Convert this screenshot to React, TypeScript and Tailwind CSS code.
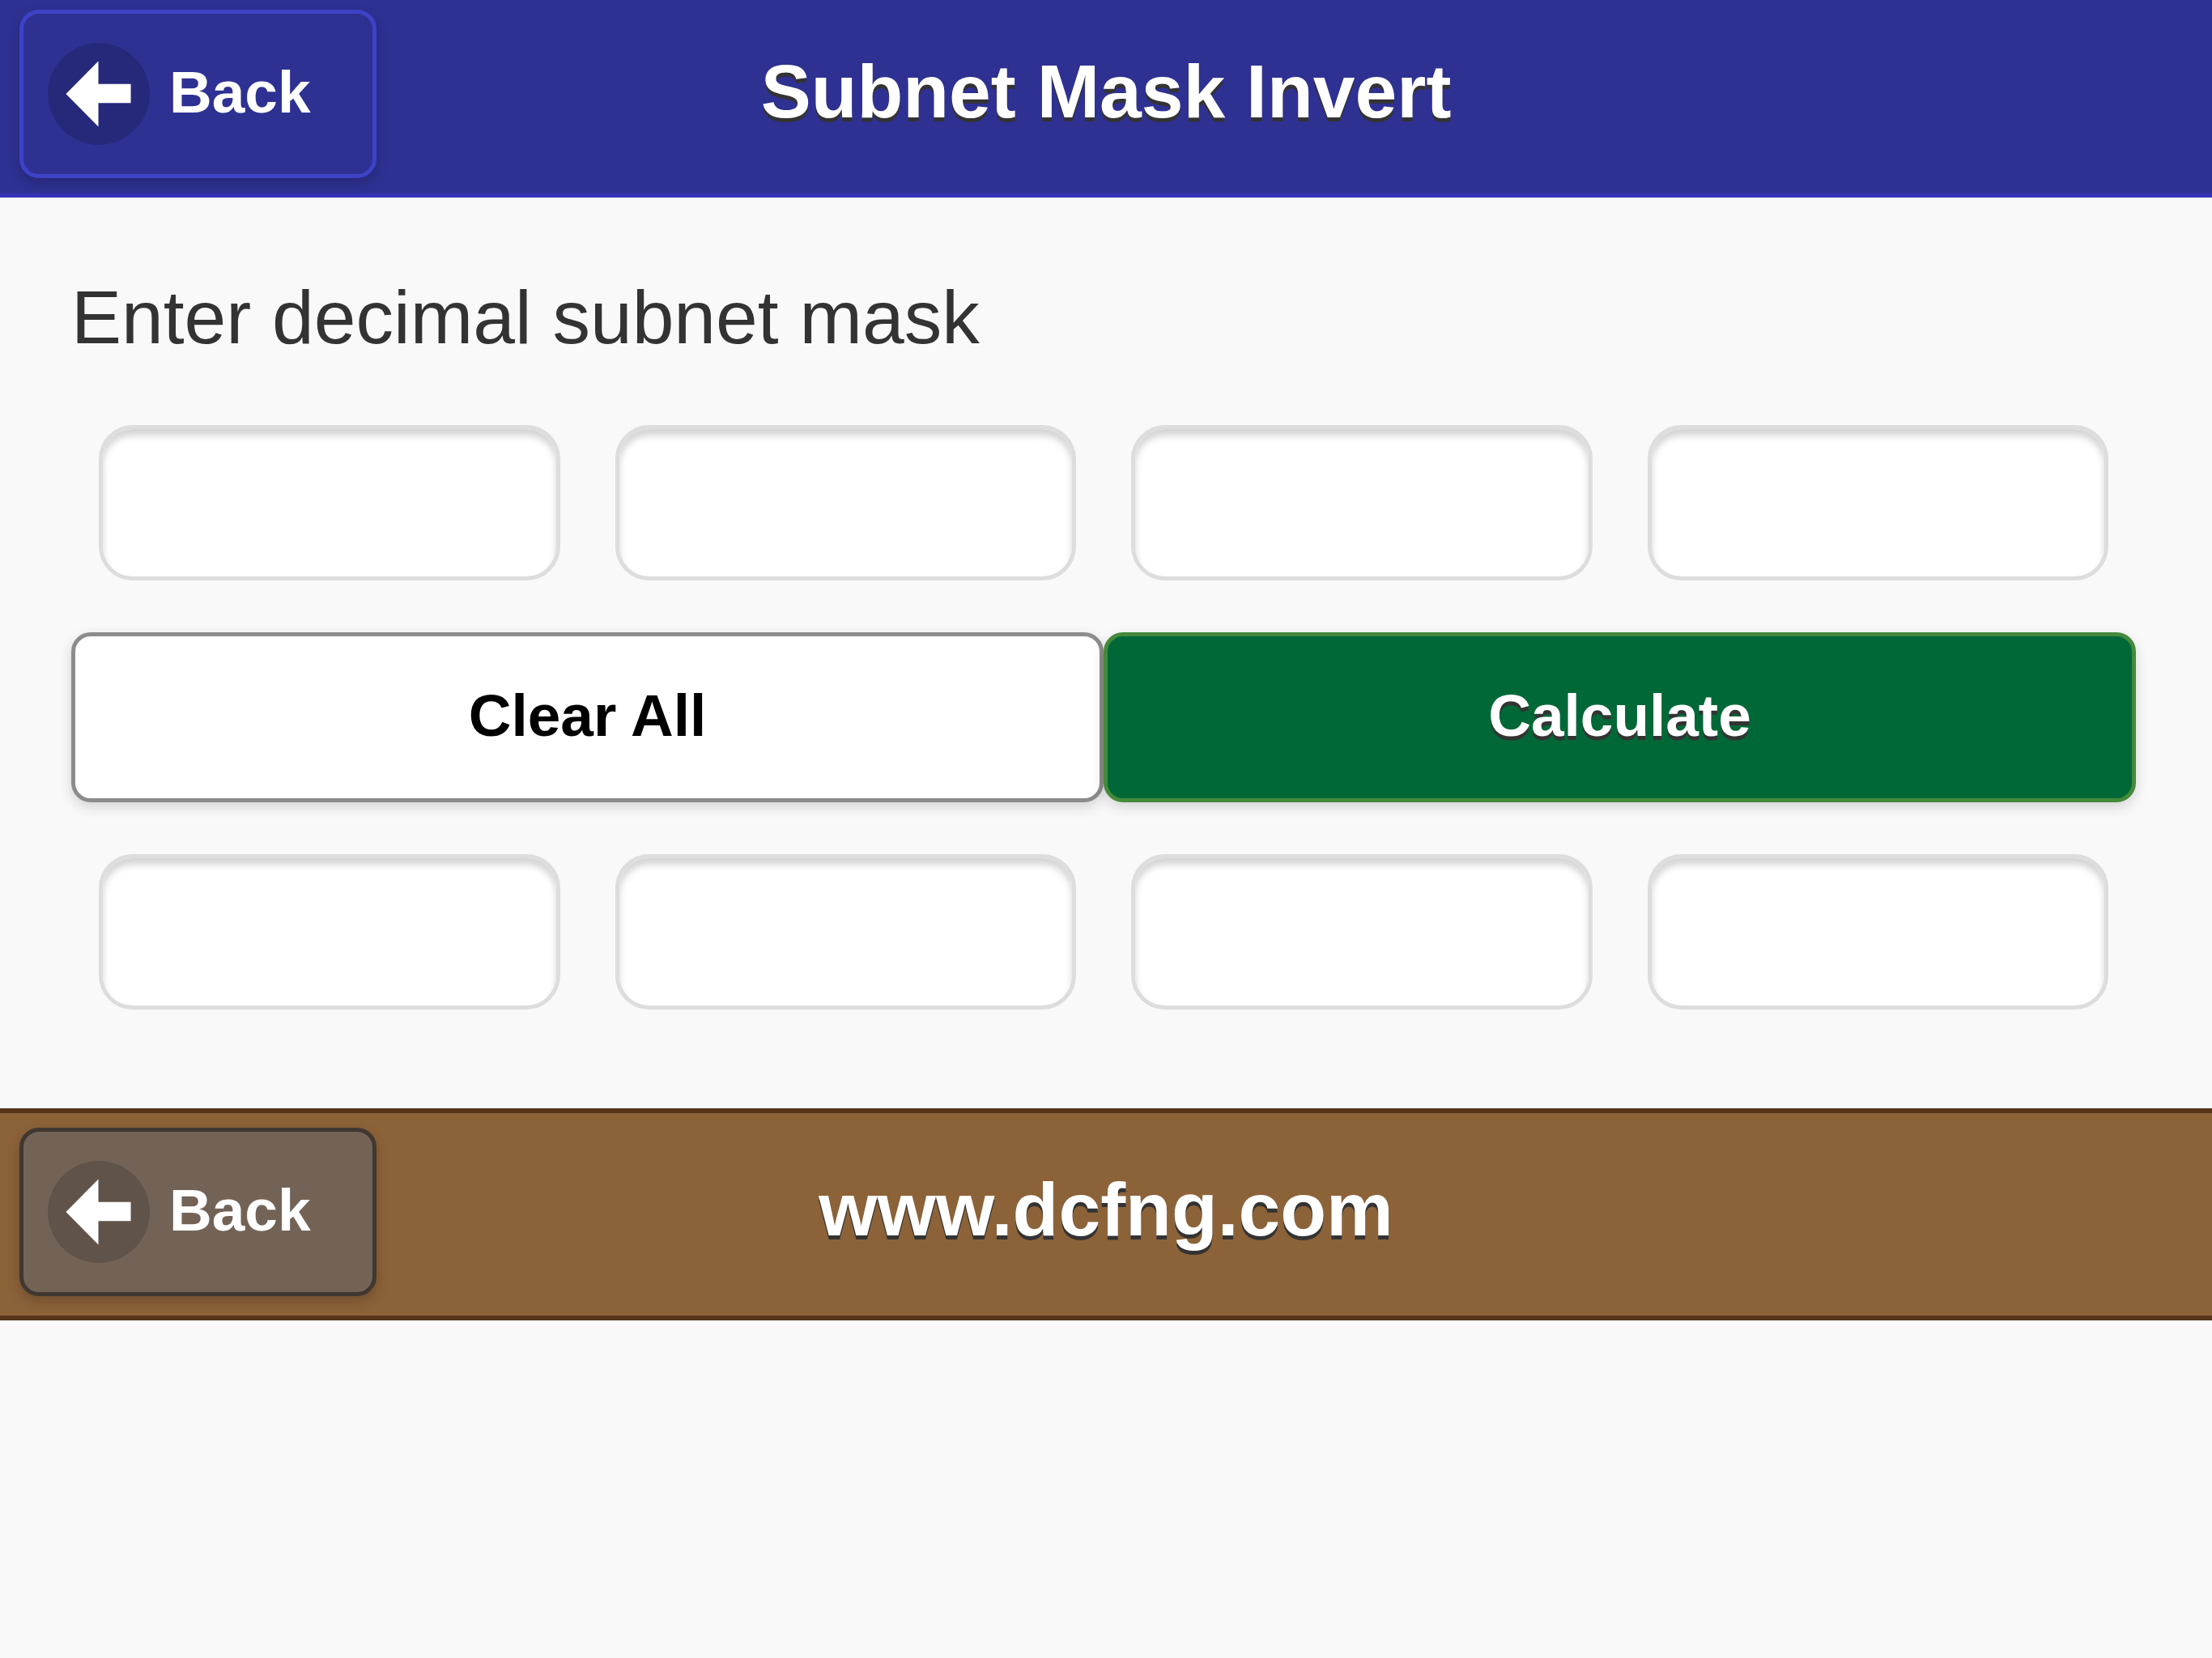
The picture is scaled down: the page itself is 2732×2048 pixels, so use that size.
import { useState } from 'react';

const EMPTY = ['', '', '', ''];

function BackButton({ className }: { className: string }) {
  return (
    <button
      type="button"
      className={`flex h-[208px] items-center gap-6 justify-self-start rounded-3xl border-[5px] pr-[76px] pl-[30px] text-[73px] leading-none font-bold shadow-[0_6px_16px_rgba(0,0,0,0.2)] ${className}`}
    >
      <svg viewBox="0 0 129 129" className="size-[126px] shrink-0" aria-hidden="true">
        <circle cx="64.5" cy="64.5" r="64.5" fill="#000" fillOpacity="0.16" />
        <path d="M23 64.5 64 23v29h41v24H64v30z" fill="#fff" />
      </svg>
      <span className="pb-1.5">Back</span>
    </button>
  );
}

function OctetRow({
  name,
  values,
  readOnly,
  onChange,
}: {
  name: string;
  values: string[];
  readOnly?: boolean;
  onChange?: (index: number, value: string) => void;
}) {
  return (
    <div className="grid grid-cols-4">
      {values.map((value, i) => (
        <div key={i} className="px-[34px]">
          <input
            type="text"
            inputMode="numeric"
            aria-label={`${name} ${i + 1}`}
            value={value}
            readOnly={readOnly}
            onChange={(e) => onChange?.(i, e.target.value)}
            className="block h-[192px] w-full rounded-[42px] border-[5px] border-[#dddddd] bg-white px-6 text-[93px] text-[#333333] shadow-[inset_0_8px_9px_rgba(0,0,0,0.17)] outline-none"
          />
        </div>
      ))}
    </div>
  );
}

export default function App() {
  const [mask, setMask] = useState(EMPTY);
  const [result, setResult] = useState(EMPTY);

  const clear = () => {
    setMask(EMPTY);
    setResult(EMPTY);
  };
  const calculate = () => setResult(mask.map((v) => String(255 - Number(v))));

  return (
    <div className="min-h-screen bg-[#f9f9f9] font-['Liberation_Sans',Arial,sans-serif] text-[#333333]">
      <header className="grid grid-cols-[1fr_auto_1fr] items-center border-b-[5px] border-[#3333bb] bg-[#2e3192] px-6 pt-3 pb-[19px] text-white [text-shadow:0_5px_0_#333333]">
        <BackButton className="border-[#3d42c7]" />
        <h1 className="pb-1.5 text-[93px] leading-none font-bold">Subnet Mask Invert</h1>
      </header>

      <main className="pt-[92px] pr-[94px] pb-[122px] pl-[88px]">
        <p className="text-[93px] leading-[112px]">Enter decimal subnet mask</p>
        <div className="mt-[77px] flex flex-col gap-16">
          <OctetRow
            name="Subnet mask octet"
            values={mask}
            onChange={(i, v) => setMask(mask.map((m, j) => (j === i ? v : m)))}
          />
          <div className="grid grid-cols-2 text-[73px] leading-none font-bold">
            <button
              type="button"
              onClick={clear}
              className="h-[210px] rounded-3xl border-[5px] border-[#8c8c8c] bg-white pb-1.5 text-black shadow-[0_6px_16px_rgba(0,0,0,0.15)]"
            >
              Clear All
            </button>
            <button
              type="button"
              onClick={calculate}
              className="h-[210px] rounded-3xl border-[5px] border-[#45893b] bg-[#006837] pb-1.5 text-white shadow-[0_6px_16px_rgba(0,0,0,0.15)] [text-shadow:0_5px_0_#333333]"
            >
              Calculate
            </button>
          </div>
          <OctetRow name="Inverted mask octet" values={result} readOnly />
        </div>
      </main>

      <footer className="grid grid-cols-[1fr_auto_1fr] items-center border-y-[6px] border-[#56351a] bg-[#8c6239] px-6 pt-[18px] pb-6 text-white [text-shadow:0_5px_0_#333333]">
        <BackButton className="border-[#403830] bg-[#736357]" />
        <p className="pb-1.5 text-[93px] leading-none font-bold">www.dcfng.com</p>
      </footer>
    </div>
  );
}
